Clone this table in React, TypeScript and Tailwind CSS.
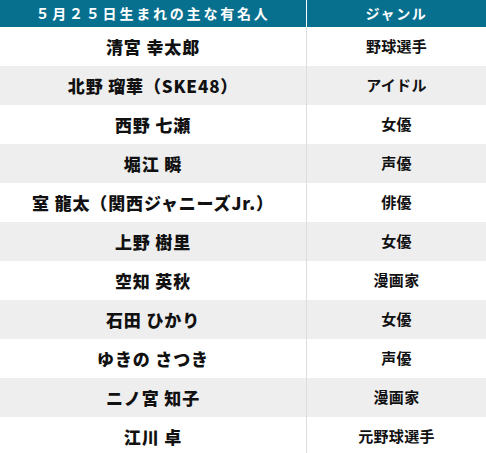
const rows = [
  { name: "清宮 幸太郎", genre: "野球選手" },
  { name: "北野 瑠華（SKE48）", genre: "アイドル" },
  { name: "西野 七瀬", genre: "女優" },
  { name: "堀江 瞬", genre: "声優" },
  { name: "室 龍太（関西ジャニーズJr.）", genre: "俳優" },
  { name: "上野 樹里", genre: "女優" },
  { name: "空知 英秋", genre: "漫画家" },
  { name: "石田 ひかり", genre: "女優" },
  { name: "ゆきの さつき", genre: "声優" },
  { name: "ニノ宮 知子", genre: "漫画家" },
  { name: "江川 卓", genre: "元野球選手" },
];

export default function App() {
  return (
    <div className="h-[453px] w-[486px] overflow-hidden bg-white font-['Noto_Sans_CJK_JP',sans-serif] text-[#111111]">
      <div className="grid grid-cols-[306px_1fr] bg-[#08708f] text-white">
        <div className="flex h-[27px] items-center justify-center text-[14px] font-bold tracking-[0.2em]">
          ５月２５日生まれの主な有名人
        </div>
        <div className="flex h-[27px] items-center justify-center border-l border-white text-[14px] font-bold tracking-[0.12em]">
          ジャンル
        </div>
      </div>
      {rows.map((row, i) => (
        <div
          key={row.name}
          className={`grid grid-cols-[306px_1fr] ${i % 2 === 1 ? "bg-[#eeeeee]" : "bg-white"}`}
        >
          <div className="flex h-[39px] items-center justify-center text-[17px] font-black tracking-[0.05em]">
            {row.name}
          </div>
          <div className="flex h-[39px] items-center justify-center border-l border-[#dddddd] text-[15px] font-bold tracking-[0.02em]">
            {row.genre}
          </div>
        </div>
      ))}
    </div>
  );
}
